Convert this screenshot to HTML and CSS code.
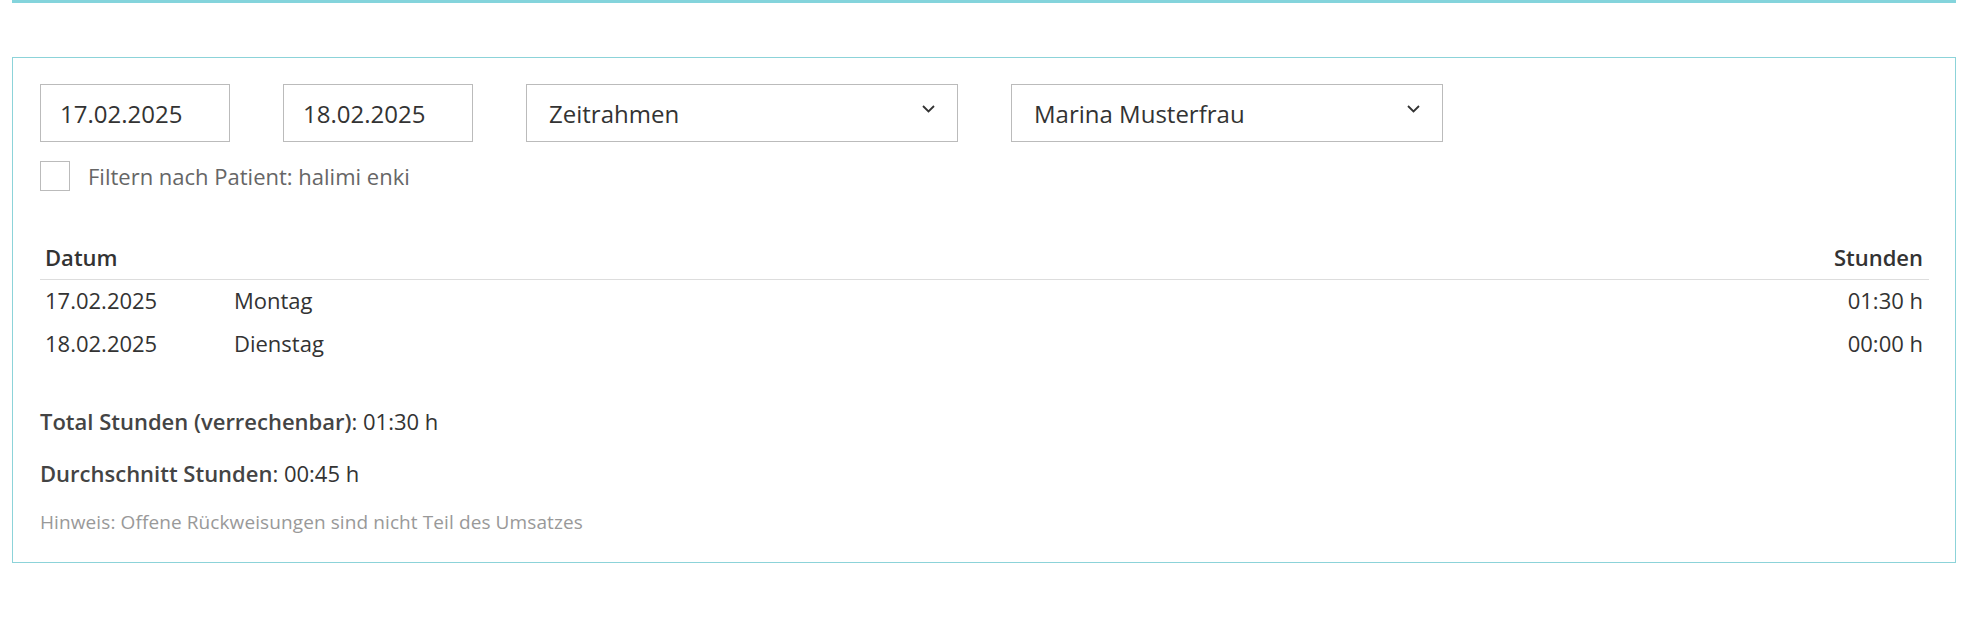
FILE: index.html
```html
<!DOCTYPE html>
<html lang="de">
<head>
  <meta charset="UTF-8" />
  <meta name="viewport" content="width=device-width, initial-scale=1.0"/>
  <title>Stunden</title>
  <link rel="stylesheet" href="styles.css">
</head>
<body>

  <div class="page">
    <div class="topbar"></div>

    <div class="panel">
      <!-- Filter -->
      <div class="filters">
        <input class="field date" type="text" value="17.02.2025">
        <input class="field date" type="text" value="18.02.2025">
        <div class="field select">
          <span>Zeitrahmen</span>
          <svg class="chevron" width="13" height="8" viewBox="0 0 13 8"><path d="M1 1l5.5 5.5L12 1" fill="none" stroke="#333" stroke-width="1.8"/></svg>
        </div>
        <div class="field select">
          <span>Marina Musterfrau</span>
          <svg class="chevron" width="13" height="8" viewBox="0 0 13 8"><path d="M1 1l5.5 5.5L12 1" fill="none" stroke="#333" stroke-width="1.8"/></svg>
        </div>
      </div>

      <label class="patient-filter">
        <span class="checkbox"></span>
        Filtern nach Patient: halimi enki
      </label>

      <table class="hours">
        <thead>
          <tr>
            <th class="col-date">Datum</th>
            <th></th>
            <th class="num">Stunden</th>
          </tr>
        </thead>
        <tbody>
          <tr>
            <td>17.02.2025</td>
            <td>Montag</td>
            <td class="num">01:30 h</td>
          </tr>
          <tr>
            <td>18.02.2025</td>
            <td>Dienstag</td>
            <td class="num">00:00 h</td>
          </tr>
        </tbody>
      </table>

      <p class="sum"><strong>Total Stunden (verrechenbar)</strong>: 01:30 h</p>
      <p class="sum"><strong>Durchschnitt Stunden</strong>: 00:45 h</p>
      <p class="hint">Hinweis: Offene Rückweisungen sind nicht Teil des Umsatzes</p>
    </div>
  </div>

</body>
</html>
```

FILE: styles.css
```css
body {
  margin: 0;
  font-family: 'Open Sans', 'Lato', sans-serif;
  color: #333;
  background: #fff;
}

.page {
  margin: 0 22px 0 12px;
}

.topbar {
  height: 3px;
  background: #84d4dc;
}

.panel {
  margin-top: 54px;
  border: 1px solid #8cd3d9;
  padding: 26px 26px 30px 27px;
}

/* Filterzeile */
.filters {
  display: flex;
  gap: 53px;
}

.field {
  box-sizing: border-box;
  height: 58px;
  border: 1px solid #bbb;
  background: #fff;
  font-family: inherit;
  font-size: 24px;
  color: #333;
  margin: 0;
  border-radius: 0;
  outline: none;
}

.field.date {
  width: 190px;
  padding: 0 19px;
}

.field.select {
  width: 432px;
  padding: 0 22px;
  display: flex;
  align-items: center;
  justify-content: space-between;
}

.chevron {
  align-self: flex-start;
  margin-top: 20px;
}

.patient-filter {
  display: flex;
  align-items: center;
  gap: 18px;
  margin-top: 19px;
  font-size: 22px;
  color: #666;
}

.checkbox {
  width: 30px;
  height: 30px;
  box-sizing: border-box;
  border: 1px solid #bbb;
}

/* Tabelle */
.hours {
  width: 100%;
  margin-top: 45px;
  border-collapse: collapse;
  font-size: 22px;
  line-height: 26px;
}

.hours th {
  text-align: left;
  font-weight: 600;
  color: #333;
  padding: 8px 6px 9px 5px;
  border-bottom: 1px solid #ddd;
}

.hours td {
  padding: 7px 6px 10px 5px;
}

.hours .col-date {
  width: 178px;
}

.hours .num {
  text-align: right;
}

.sum {
  margin: 42px 0 0;
  font-size: 22px;
  line-height: 26px;
  color: #333;
}

.sum + .sum {
  margin-top: 26px;
}

.sum strong {
  font-weight: 600;
  color: #444;
}

.hint {
  margin: 26px 0 0;
  font-size: 19px;
  line-height: 20px;
  letter-spacing: 0.1px;
  color: #999;
}
```
